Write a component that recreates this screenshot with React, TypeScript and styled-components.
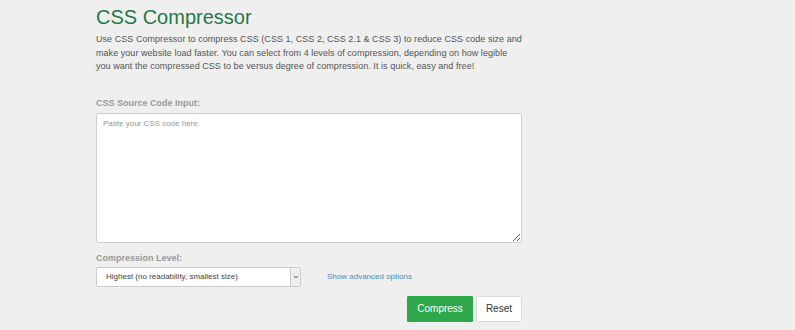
import styled, { createGlobalStyle } from "styled-components";

const GlobalStyle = createGlobalStyle`
  html, body {
    margin: 0;
    padding: 0;
    background-color: #efefef;
    font-family: "Liberation Sans", Arial, sans-serif;
  }
`;

const App = (): JSX.Element => {
  return (
    <>
      <GlobalStyle />
      <Page>
        <Title>CSS Compressor</Title>
        <Intro>
          Use CSS Compressor to compress CSS (CSS 1, CSS 2, CSS 2.1 &amp; CSS 3) to reduce CSS code size and
          <br />
          make your website load faster. You can select from 4 levels of compression, depending on how legible
          <br />
          you want the compressed CSS to be versus degree of compression. It is quick, easy and free!
        </Intro>
        <Label $gap={23}>CSS Source Code Input:</Label>
        <SourceInput placeholder="Paste your CSS code here." />
        <Label $gap={9}>Compression Level:</Label>
        <OptionsRow>
          <LevelSelect>
            <LevelValue>Highest (no readability, smallest size)</LevelValue>
            <SelectArrow>
              <svg width="6" height="4" viewBox="0 0 6 4">
                <path d="M0.8 0.8 L3 3 L5.2 0.8" fill="none" stroke="#666" strokeWidth="1" />
              </svg>
            </SelectArrow>
          </LevelSelect>
          <AdvancedLink href="#">Show advanced options</AdvancedLink>
        </OptionsRow>
        <Actions>
          <Button $primary>Compress</Button>
          <Button>Reset</Button>
        </Actions>
      </Page>
    </>
  );
};

export default App;

const Page = styled.div`
  width: 426px;
  padding: 5px 0 0 96px;
  display: flex;
  flex-direction: column;
`;

const Title = styled.h1`
  margin: 0;
  font-size: 20px;
  line-height: 24px;
  font-weight: normal;
  color: #1f7a45;
`;

const Intro = styled.p`
  margin: 4px 0 0;
  font-size: 9px;
  line-height: 13.5px;
  letter-spacing: 0.05px;
  white-space: nowrap;
  color: #555;
`;

const Label = styled.div<{ $gap: number }>`
  margin-top: ${(p) => p.$gap}px;
  font-size: 9px;
  line-height: 12px;
  font-weight: bold;
  color: #9a9a9a;
`;

const SourceInput = styled.textarea`
  box-sizing: border-box;
  margin-top: 4px;
  width: 426px;
  height: 130px;
  padding: 5px 6px;
  border: 1px solid #d0d0d0;
  border-radius: 2px;
  background: #fff;
  resize: vertical;
  font-family: "Liberation Sans", Arial, sans-serif;
  font-size: 8px;
  color: #555;

  &::placeholder {
    color: #999;
  }
`;

const OptionsRow = styled.div`
  margin-top: 3px;
  display: flex;
  align-items: center;
  gap: 26px;
`;

const LevelSelect = styled.div`
  box-sizing: border-box;
  width: 205px;
  height: 20px;
  display: flex;
  border: 1px solid #ccc;
  border-radius: 2px;
  background: #fff;
`;

const LevelValue = styled.div`
  flex: 1;
  padding-left: 9px;
  font-size: 8px;
  line-height: 18px;
  color: #444;
`;

const SelectArrow = styled.div`
  width: 9px;
  display: flex;
  align-items: center;
  justify-content: center;
  border-left: 1px solid #ccc;
  background: #eee;
`;

const AdvancedLink = styled.a`
  font-size: 8px;
  color: #4a8bc4;
  text-decoration: none;
`;

const Actions = styled.div`
  margin-top: 9px;
  display: flex;
  justify-content: flex-end;
  gap: 3px;
`;

const Button = styled.button<{ $primary?: boolean }>`
  height: 26px;
  padding: 0 9px;
  border: 1px solid ${(p) => (p.$primary ? "#2ea84a" : "#ddd")};
  border-radius: 1px;
  background: ${(p) => (p.$primary ? "#2ea84a" : "#fff")};
  color: ${(p) => (p.$primary ? "#fff" : "#333")};
  font-family: "Liberation Sans", Arial, sans-serif;
  font-size: 10px;
`;
